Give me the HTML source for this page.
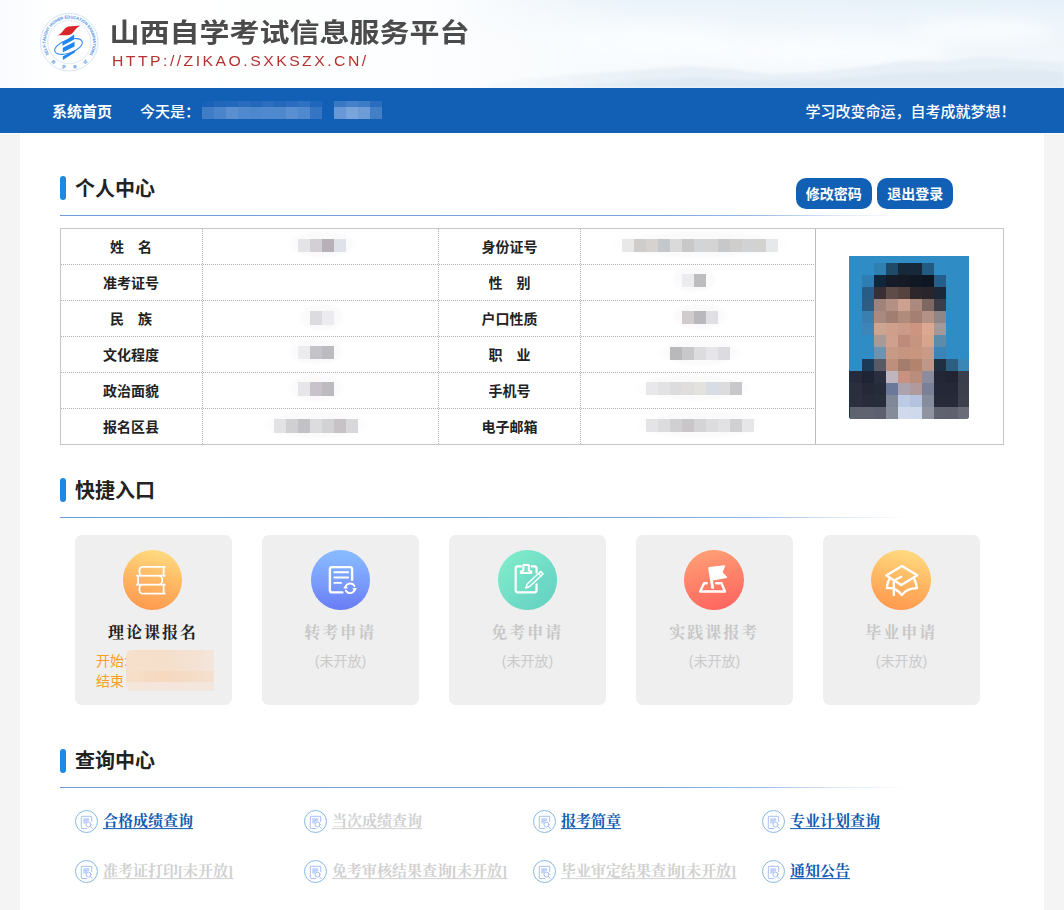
<!DOCTYPE html>
<html lang="zh-CN"><head><meta charset="utf-8"><title>山西自学考试信息服务平台</title>
<style>
html,body{margin:0;padding:0}
body{width:1064px;height:910px;position:relative;overflow:hidden;background:#f4f4f4;font-family:"Liberation Sans","Noto Sans CJK SC",sans-serif}
.p{position:absolute;margin:0;padding:0;display:block;text-decoration:none;font-weight:normal}
.t{position:relative;display:block;overflow:hidden}
.t svg{position:absolute;left:0;top:0;display:block;overflow:visible}
.t .x{position:absolute;left:0;top:0;white-space:nowrap;font-family:"Liberation Sans","Noto Sans CJK SC",sans-serif}
.t .x.b{font-weight:bold}
.t .x.sf{font-family:"Liberation Serif","Noto Serif CJK SC",serif;font-weight:bold}
.hdr{background:#fff;overflow:hidden}
.url{color:#b33330;font-size:14px;letter-spacing:2.19px;line-height:16px;white-space:nowrap;transform:scaleX(1.127);transform-origin:0 0}
.mz i{position:absolute;top:0;height:100%;display:block}
</style></head>
<body>
<div class="p hdr" style="left:0;top:0;width:1064px;height:88px"></div>
<svg class="p" style="left:0;top:0" width="1064" height="88" viewBox="0 0 1064 88" aria-hidden="true"><defs><linearGradient id="sk1" x1="0" x2="1" y1="0" y2="0"><stop offset="0" stop-color="#fbfdff"/><stop offset=".04" stop-color="#ffffff"/><stop offset=".38" stop-color="#fdfeff"/><stop offset=".55" stop-color="#f8fbfd"/><stop offset=".8" stop-color="#f3f8fc"/><stop offset="1" stop-color="#f0f6fb"/></linearGradient><linearGradient id="sk2" x1="0" x2="0" y1="0" y2="1"><stop offset="0" stop-color="#dcebf7" stop-opacity=".5"/><stop offset=".3" stop-color="#e8f2fa" stop-opacity=".25"/><stop offset=".6" stop-color="#fff" stop-opacity="0"/></linearGradient><linearGradient id="sk3" x1="0" x2="1" y1="0" y2="0"><stop offset="0" stop-color="#fff" stop-opacity="0"/><stop offset=".42" stop-color="#fff" stop-opacity="0"/><stop offset=".6" stop-color="#fff" stop-opacity="1"/><stop offset="1" stop-color="#fff" stop-opacity="1"/></linearGradient><linearGradient id="sk4" x1="0" x2="1" y1="0" y2="0"><stop offset="0" stop-color="#f9fbfe"/><stop offset=".55" stop-color="#fbfdff" stop-opacity=".8"/><stop offset="1" stop-color="#fff" stop-opacity="0"/></linearGradient><mask id="skm"><rect width="1064" height="88" fill="url(#sk3)"/></mask><filter id="blr" x="-5%" y="-50%" width="110%" height="200%"><feGaussianBlur stdDeviation="1.6"/></filter><filter id="blr2" x="-10%" y="-80%" width="120%" height="260%"><feGaussianBlur stdDeviation="7"/></filter></defs><rect width="1064" height="88" fill="url(#sk1)"/><g mask="url(#skm)"><rect width="1064" height="88" fill="url(#sk2)"/><g filter="url(#blr2)" fill="#fafdff" opacity=".9"><ellipse cx="640" cy="42" rx="90" ry="16"/><ellipse cx="820" cy="52" rx="130" ry="14"/><ellipse cx="980" cy="30" rx="70" ry="9"/></g><g filter="url(#blr)"><path d="M470 88 L520 80 L580 74 L640 70 L690 66 L730 69 L770 74 L820 72 L870 66 L905 60 L940 62 L985 57 L1020 60 L1064 63 L1064 88Z" fill="#e6eef6" opacity=".85"/><path d="M560 88 L640 80 L700 77 L760 81 L830 79 L900 73 L960 71 L1010 68 L1064 72 L1064 88Z" fill="#dfe9f2" opacity=".8"/></g></g><rect x="0" y="0" width="60" height="88" fill="url(#sk4)"/></svg>
<div class="p" style="left:40.1px;top:12.6px;width:58.6px;height:58.6px"><svg width="58.6" height="58.6" viewBox="0 0 59 59" aria-hidden="true" style="display:block;overflow:visible"><circle cx="29.5" cy="29.4" r="29" fill="#fff" stroke="#cfe2f6" stroke-width="0.9"/><circle cx="29.5" cy="29.4" r="21.7" fill="none" stroke="#d3e5f7" stroke-width="0.8"/><g fill="#4d92e3" font-family="Liberation Sans, sans-serif" font-weight="bold" font-size="4.2" text-anchor="middle"><text transform="translate(8.36 40.55) rotate(242.2)">S</text><text transform="translate(7.25 38.13) rotate(248.6)">E</text><text transform="translate(6.45 35.72) rotate(254.7)">L</text><text transform="translate(5.93 33.34) rotate(260.5)">F</text><text transform="translate(5.69 31.47) rotate(265.0)">-</text><text transform="translate(5.60 29.59) rotate(269.5)">T</text><text transform="translate(5.73 26.93) rotate(275.9)">A</text><text transform="translate(6.20 24.09) rotate(282.8)">U</text><text transform="translate(7.04 21.23) rotate(290.0)">G</text><text transform="translate(8.24 18.49) rotate(297.2)">H</text><text transform="translate(9.58 16.19) rotate(303.5)">T</text><text transform="translate(11.90 13.23) rotate(312.6)">H</text><text transform="translate(13.31 11.82) rotate(317.4)">I</text><text transform="translate(14.92 10.46) rotate(322.4)">G</text><text transform="translate(17.40 8.79) rotate(329.6)">H</text><text transform="translate(19.86 7.53) rotate(336.2)">E</text><text transform="translate(22.46 6.56) rotate(342.9)">R</text><text transform="translate(26.24 5.72) rotate(352.2)">E</text><text transform="translate(29.00 5.51) rotate(358.8)">D</text><text transform="translate(31.88 5.62) rotate(365.7)">U</text><text transform="translate(34.72 6.08) rotate(372.6)">C</text><text transform="translate(37.49 6.87) rotate(379.5)">A</text><text transform="translate(39.94 7.90) rotate(385.9)">T</text><text transform="translate(41.50 8.73) rotate(390.1)">I</text><text transform="translate(43.28 9.87) rotate(395.2)">O</text><text transform="translate(45.61 11.74) rotate(402.4)">N</text><text transform="translate(48.25 14.58) rotate(411.7)">E</text><text transform="translate(49.78 16.75) rotate(418.0)">X</text><text transform="translate(51.11 19.18) rotate(424.7)">A</text><text transform="translate(52.25 22.06) rotate(432.1)">M</text><text transform="translate(52.83 24.20) rotate(437.4)">I</text><text transform="translate(53.18 26.16) rotate(442.2)">N</text><text transform="translate(53.40 29.04) rotate(449.1)">A</text><text transform="translate(53.29 31.69) rotate(455.5)">T</text><text transform="translate(53.05 33.45) rotate(459.7)">I</text><text transform="translate(52.61 35.50) rotate(464.8)">O</text><text transform="translate(51.66 38.34) rotate(472.0)">N</text><text transform="translate(50.48 40.85) rotate(478.6)">S</text></g><g fill="#5e9fe4" font-family="Liberation Sans, Noto Sans CJK SC, sans-serif" font-weight="bold" font-size="4.2" text-anchor="middle"><text transform="translate(13.45 49.22) rotate(39.0)" y="1.6">自</text><text transform="translate(23.76 54.25) rotate(13.0)" y="1.6">学</text><text transform="translate(35.24 54.25) rotate(-13.0)" y="1.6">考</text><text transform="translate(45.55 49.22) rotate(-39.0)" y="1.6">试</text></g><path d="M16.8 22.6C22.2 21.8 23.8 15 28.4 13.6 32.4 12.7 37.2 13.2 40.8 12.5 35.6 14.8 33.8 20.6 30 21.9 26 22.9 21.2 22.2 16.8 22.6Z" fill="#d8262b"/><g fill="#1e86ee"><path d="M22.5 29.8L34.4 21.7V26.8L22.5 32.9Z"/><path d="M23 35.1L34.8 28.9V33.8L23 39.5Z"/><path d="M23 43.5L35.3 37.2V39.6L23 47.4Z"/></g><ellipse cx="28.7" cy="33.7" rx="14.6" ry="6.6" transform="rotate(-20 28.7 33.7)" fill="none" stroke="#2a88ee" stroke-width="1.05"/></svg></div>
<h1 class="p" style="left:109.60px;top:11.40px"><span class="t " style="width:360px;height:42px;"><span class="x b" style="font-size:30px;line-height:42px;color:#4b4b4b;transform:scaleY(.89);transform-origin:0 31px">山西自学考试信息服务平台</span></span></h1>
<span class="p" style="left:112.00px;top:50.85px"><span class="t " style="width:257px;height:20px;"><span class="x url" style="line-height:20px">HTTP://ZIKAO.SXKSZX.CN/</span></span></span>
<div class="p " style="left:0px;top:88px;width:1064px;height:44.7px;background:#1260b5"></div>
<a class="p" style="left:52.00px;top:100.50px"><span class="t " style="width:60px;height:21px;"><span class="x b" style="font-size:15px;line-height:21px;color:#fff">系统首页</span></span></a>
<span class="p" style="left:140.00px;top:100.50px"><span class="t " style="width:60px;height:21px;"><span class="x" style="font-size:15px;line-height:21px;color:#fff;font-weight:500">今天是：</span></span></span>
<div class="p mz" style="left:201.7px;top:100.8px;width:120px;height:6.4px;overflow:hidden;border-radius:6px 0 0 0"><i style="left:0.00px;width:12.30px;background:#1a62b8"></i><i style="left:12.00px;width:12.30px;background:#2066ba"></i><i style="left:24.00px;width:12.30px;background:#2268bc"></i><i style="left:36.00px;width:12.30px;background:#2a6dc0"></i><i style="left:48.00px;width:12.30px;background:#2468bc"></i><i style="left:60.00px;width:12.30px;background:#2b6ec0"></i><i style="left:72.00px;width:12.30px;background:#2468bc"></i><i style="left:84.00px;width:12.30px;background:#2a6dc0"></i><i style="left:96.00px;width:12.30px;background:#2e70c2"></i><i style="left:108.00px;width:12.30px;background:#2066ba"></i></div>
<div class="p mz" style="left:201.7px;top:107px;width:120px;height:11.8px;overflow:hidden;"><i style="left:0.00px;width:12.30px;background:#407dc6"></i><i style="left:12.00px;width:12.30px;background:#4a85cb"></i><i style="left:24.00px;width:12.30px;background:#5a8fd0"></i><i style="left:36.00px;width:12.30px;background:#5089cd"></i><i style="left:48.00px;width:12.30px;background:#4e87cc"></i><i style="left:60.00px;width:12.30px;background:#5089cd"></i><i style="left:72.00px;width:12.30px;background:#4f88cd"></i><i style="left:84.00px;width:12.30px;background:#5a90d2"></i><i style="left:96.00px;width:12.30px;background:#5089cd"></i><i style="left:108.00px;width:12.30px;background:#3675c3"></i></div>
<div class="p mz" style="left:333.7px;top:100.8px;width:48px;height:6.4px;overflow:hidden;"><i style="left:0.00px;width:12.30px;background:#3a78c5"></i><i style="left:12.00px;width:12.30px;background:#4580c9"></i><i style="left:24.00px;width:12.30px;background:#3f7cc7"></i><i style="left:36.00px;width:12.30px;background:#2a6dc0"></i></div>
<div class="p mz" style="left:333.7px;top:107px;width:48px;height:11.8px;overflow:hidden;"><i style="left:0.00px;width:12.30px;background:#6898d5"></i><i style="left:12.00px;width:12.30px;background:#7aa5dc"></i><i style="left:24.00px;width:12.30px;background:#6d9cd7"></i><i style="left:36.00px;width:12.30px;background:#437fc7"></i></div>
<span class="p" style="left:805.50px;top:100.50px"><span class="t " style="width:210px;height:21px;"><span class="x" style="font-size:15px;line-height:21px;color:#fff;font-weight:500">学习改变命运，自考成就梦想！</span></span></span>
<div class="p " style="left:0px;top:132.7px;width:1064px;height:1.3px;background:#fff"></div>
<div class="p " style="left:20px;top:134px;width:1024px;height:776px;background:#fff"></div>
<div class="p " style="left:60px;top:176px;width:6px;height:24px;background:#1e88e5;border-radius:3px"></div>
<h2 class="p" style="left:75.00px;top:175.00px"><span class="t " style="width:80px;height:28px;"><span class="x b" style="font-size:20px;line-height:28px;color:#222222">个人中心</span></span></h2>
<div class="p " style="left:60px;top:215px;width:850px;height:1.2px;background:linear-gradient(90deg,#6e9bdb 0%,#78a5de 70%,rgba(125,170,225,0.8) 82%,rgba(160,195,235,0.35) 92%,rgba(255,255,255,0) 100%)"></div>
<div class="p " style="left:60px;top:478px;width:6px;height:24px;background:#1e88e5;border-radius:3px"></div>
<h2 class="p" style="left:75.00px;top:477.20px"><span class="t " style="width:80px;height:28px;"><span class="x b" style="font-size:20px;line-height:28px;color:#222222">快捷入口</span></span></h2>
<div class="p " style="left:60px;top:517px;width:850px;height:1.2px;background:linear-gradient(90deg,#6e9bdb 0%,#78a5de 70%,rgba(125,170,225,0.8) 82%,rgba(160,195,235,0.35) 92%,rgba(255,255,255,0) 100%)"></div>
<div class="p " style="left:60px;top:748.5px;width:6px;height:24px;background:#1e88e5;border-radius:3px"></div>
<h2 class="p" style="left:75.00px;top:747.30px"><span class="t " style="width:80px;height:28px;"><span class="x b" style="font-size:20px;line-height:28px;color:#222222">查询中心</span></span></h2>
<div class="p " style="left:60px;top:787px;width:850px;height:1.2px;background:linear-gradient(90deg,#6e9bdb 0%,#78a5de 70%,rgba(125,170,225,0.8) 82%,rgba(160,195,235,0.35) 92%,rgba(255,255,255,0) 100%)"></div>
<div class="p " style="left:796px;top:178.4px;width:75.7px;height:30.2px;background:#1260b5;border-radius:10px"></div>
<a class="p" style="left:805.85px;top:183.70px"><span class="t " style="width:56px;height:20px;"><span class="x b" style="font-size:14px;line-height:20px;color:#fff">修改密码</span></span></a>
<div class="p " style="left:877.3px;top:178.4px;width:75.7px;height:30.2px;background:#1260b5;border-radius:10px"></div>
<a class="p" style="left:887.15px;top:183.70px"><span class="t " style="width:56px;height:20px;"><span class="x b" style="font-size:14px;line-height:20px;color:#fff">退出登录</span></span></a>
<div class="p " style="left:60px;top:228px;width:944px;height:217px;border:1px solid #c6c6c6;box-sizing:border-box"></div>
<div class="p " style="left:815px;top:229px;width:1px;height:215px;background:#bcbcbc"></div>
<div class="p " style="left:202px;top:229px;width:1px;height:215px;background:repeating-linear-gradient(180deg,#b2b2b2 0 1px,transparent 1px 2px)"></div>
<div class="p " style="left:438px;top:229px;width:1px;height:215px;background:repeating-linear-gradient(180deg,#b2b2b2 0 1px,transparent 1px 2px)"></div>
<div class="p " style="left:580px;top:229px;width:1px;height:215px;background:repeating-linear-gradient(180deg,#b2b2b2 0 1px,transparent 1px 2px)"></div>
<div class="p " style="left:61px;top:264px;width:754px;height:1px;background:repeating-linear-gradient(90deg,#b2b2b2 0 1px,transparent 1px 2px)"></div>
<div class="p " style="left:61px;top:300px;width:754px;height:1px;background:repeating-linear-gradient(90deg,#b2b2b2 0 1px,transparent 1px 2px)"></div>
<div class="p " style="left:61px;top:336px;width:754px;height:1px;background:repeating-linear-gradient(90deg,#b2b2b2 0 1px,transparent 1px 2px)"></div>
<div class="p " style="left:61px;top:372px;width:754px;height:1px;background:repeating-linear-gradient(90deg,#b2b2b2 0 1px,transparent 1px 2px)"></div>
<div class="p " style="left:61px;top:408px;width:754px;height:1px;background:repeating-linear-gradient(90deg,#b2b2b2 0 1px,transparent 1px 2px)"></div>
<span class="p" style="left:110.00px;top:236.50px"><span class="t " style="width:42px;height:20px;"><span class="x b" style="font-size:14px;line-height:20px;color:#222222">姓　名</span></span></span>
<span class="p" style="left:481.50px;top:236.50px"><span class="t " style="width:56px;height:20px;"><span class="x b" style="font-size:14px;line-height:20px;color:#222222">身份证号</span></span></span>
<span class="p" style="left:103.00px;top:272.50px"><span class="t " style="width:56px;height:20px;"><span class="x b" style="font-size:14px;line-height:20px;color:#222222">准考证号</span></span></span>
<span class="p" style="left:488.50px;top:272.50px"><span class="t " style="width:42px;height:20px;"><span class="x b" style="font-size:14px;line-height:20px;color:#222222">性　别</span></span></span>
<span class="p" style="left:110.00px;top:308.50px"><span class="t " style="width:42px;height:20px;"><span class="x b" style="font-size:14px;line-height:20px;color:#222222">民　族</span></span></span>
<span class="p" style="left:481.50px;top:308.50px"><span class="t " style="width:56px;height:20px;"><span class="x b" style="font-size:14px;line-height:20px;color:#222222">户口性质</span></span></span>
<span class="p" style="left:103.00px;top:344.50px"><span class="t " style="width:56px;height:20px;"><span class="x b" style="font-size:14px;line-height:20px;color:#222222">文化程度</span></span></span>
<span class="p" style="left:488.50px;top:344.50px"><span class="t " style="width:42px;height:20px;"><span class="x b" style="font-size:14px;line-height:20px;color:#222222">职　业</span></span></span>
<span class="p" style="left:103.00px;top:380.50px"><span class="t " style="width:56px;height:20px;"><span class="x b" style="font-size:14px;line-height:20px;color:#222222">政治面貌</span></span></span>
<span class="p" style="left:488.50px;top:380.50px"><span class="t " style="width:42px;height:20px;"><span class="x b" style="font-size:14px;line-height:20px;color:#222222">手机号</span></span></span>
<span class="p" style="left:103.00px;top:416.50px"><span class="t " style="width:56px;height:20px;"><span class="x b" style="font-size:14px;line-height:20px;color:#222222">报名区县</span></span></span>
<span class="p" style="left:481.50px;top:416.50px"><span class="t " style="width:56px;height:20px;"><span class="x b" style="font-size:14px;line-height:20px;color:#222222">电子邮箱</span></span></span>
<div class="p " style="left:286px;top:230px;width:72px;height:29px;border-radius:45%/60%;background:radial-gradient(ellipse closest-side,rgba(249,249,250,.96) 0%,rgba(250,250,251,.92) 78%,rgba(255,255,255,0) 100%)"></div>
<div class="p mz" style="left:298px;top:239px;width:48px;height:13px;overflow:hidden"><i style="left:0.00px;width:12.30px;background:#e4e4e6"></i><i style="left:12.00px;width:12.30px;background:#d2d0d4"></i><i style="left:24.00px;width:12.30px;background:#b8b0b8"></i><i style="left:36.00px;width:12.30px;background:#dfe2e8"></i></div>
<div class="p " style="left:610px;top:230px;width:180px;height:28.5px;border-radius:45%/60%;background:radial-gradient(ellipse closest-side,rgba(249,249,250,.96) 0%,rgba(250,250,251,.92) 78%,rgba(255,255,255,0) 100%)"></div>
<div class="p mz" style="left:622px;top:239px;width:156px;height:12.5px;overflow:hidden"><i style="left:0.00px;width:12.30px;background:#e8e8e8"></i><i style="left:12.00px;width:12.30px;background:#cfcdcc"></i><i style="left:24.00px;width:12.30px;background:#d6d2d0"></i><i style="left:36.00px;width:12.30px;background:#c4c8cc"></i><i style="left:48.00px;width:12.30px;background:#dadada"></i><i style="left:60.00px;width:12.30px;background:#c8c8c8"></i><i style="left:72.00px;width:12.30px;background:#d2d4d6"></i><i style="left:84.00px;width:12.30px;background:#d4d4d4"></i><i style="left:96.00px;width:12.30px;background:#c6c8ca"></i><i style="left:108.00px;width:12.30px;background:#cfcecc"></i><i style="left:120.00px;width:12.30px;background:#d0d2d4"></i><i style="left:132.00px;width:12.30px;background:#d2d2d0"></i><i style="left:144.00px;width:12.30px;background:#e6e8ea"></i></div>
<div class="p " style="left:670px;top:265px;width:48px;height:29px;border-radius:45%/60%;background:radial-gradient(ellipse closest-side,rgba(249,249,250,.96) 0%,rgba(250,250,251,.92) 78%,rgba(255,255,255,0) 100%)"></div>
<div class="p mz" style="left:682px;top:274px;width:24px;height:13px;overflow:hidden"><i style="left:0.00px;width:12.30px;background:#ececee"></i><i style="left:12.00px;width:12.30px;background:#bdbdc0"></i></div>
<div class="p " style="left:298px;top:302px;width:48px;height:30px;border-radius:45%/60%;background:radial-gradient(ellipse closest-side,rgba(249,249,250,.96) 0%,rgba(250,250,251,.92) 78%,rgba(255,255,255,0) 100%)"></div>
<div class="p mz" style="left:310px;top:311px;width:24px;height:14px;overflow:hidden"><i style="left:0.00px;width:12.30px;background:#dcdcde"></i><i style="left:12.00px;width:12.30px;background:#ececf0"></i></div>
<div class="p " style="left:670px;top:302px;width:60px;height:29px;border-radius:45%/60%;background:radial-gradient(ellipse closest-side,rgba(249,249,250,.96) 0%,rgba(250,250,251,.92) 78%,rgba(255,255,255,0) 100%)"></div>
<div class="p mz" style="left:682px;top:311px;width:36px;height:13px;overflow:hidden"><i style="left:0.00px;width:12.30px;background:#d0ccce"></i><i style="left:12.00px;width:12.30px;background:#b9b9bc"></i><i style="left:24.00px;width:12.30px;background:#e0e0e4"></i></div>
<div class="p " style="left:286px;top:337px;width:60px;height:29px;border-radius:45%/60%;background:radial-gradient(ellipse closest-side,rgba(249,249,250,.96) 0%,rgba(250,250,251,.92) 78%,rgba(255,255,255,0) 100%)"></div>
<div class="p mz" style="left:298px;top:346px;width:36px;height:13px;overflow:hidden"><i style="left:0.00px;width:12.30px;background:#ececee"></i><i style="left:12.00px;width:12.30px;background:#c4c4c8"></i><i style="left:24.00px;width:12.30px;background:#bcbcc0"></i></div>
<div class="p " style="left:658px;top:338px;width:84px;height:29px;border-radius:45%/60%;background:radial-gradient(ellipse closest-side,rgba(249,249,250,.96) 0%,rgba(250,250,251,.92) 78%,rgba(255,255,255,0) 100%)"></div>
<div class="p mz" style="left:670px;top:347px;width:60px;height:13px;overflow:hidden"><i style="left:0.00px;width:12.30px;background:#b9b9bc"></i><i style="left:12.00px;width:12.30px;background:#c8c8ca"></i><i style="left:24.00px;width:12.30px;background:#dcdcde"></i><i style="left:36.00px;width:12.30px;background:#e6e6ea"></i><i style="left:48.00px;width:12.30px;background:#dcdce0"></i></div>
<div class="p " style="left:286px;top:373px;width:60px;height:30px;border-radius:45%/60%;background:radial-gradient(ellipse closest-side,rgba(249,249,250,.96) 0%,rgba(250,250,251,.92) 78%,rgba(255,255,255,0) 100%)"></div>
<div class="p mz" style="left:298px;top:382px;width:36px;height:14px;overflow:hidden"><i style="left:0.00px;width:12.30px;background:#e6e6e8"></i><i style="left:12.00px;width:12.30px;background:#c8c2ca"></i><i style="left:24.00px;width:12.30px;background:#bcbcc0"></i></div>
<div class="p " style="left:634px;top:373px;width:120px;height:29px;border-radius:45%/60%;background:radial-gradient(ellipse closest-side,rgba(249,249,250,.96) 0%,rgba(250,250,251,.92) 78%,rgba(255,255,255,0) 100%)"></div>
<div class="p mz" style="left:646px;top:382px;width:96px;height:13px;overflow:hidden"><i style="left:0.00px;width:12.30px;background:#e8e8ea"></i><i style="left:12.00px;width:12.30px;background:#e2e2e4"></i><i style="left:24.00px;width:12.30px;background:#dcdcde"></i><i style="left:36.00px;width:12.30px;background:#e0dedc"></i><i style="left:48.00px;width:12.30px;background:#e4e2de"></i><i style="left:60.00px;width:12.30px;background:#d8dce4"></i><i style="left:72.00px;width:12.30px;background:#dcdcde"></i><i style="left:84.00px;width:12.30px;background:#c8c8ca"></i></div>
<div class="p " style="left:262px;top:410px;width:108px;height:30px;border-radius:45%/60%;background:radial-gradient(ellipse closest-side,rgba(249,249,250,.96) 0%,rgba(250,250,251,.92) 78%,rgba(255,255,255,0) 100%)"></div>
<div class="p mz" style="left:274px;top:419px;width:84px;height:14px;overflow:hidden"><i style="left:0.00px;width:12.30px;background:#e2e2e4"></i><i style="left:12.00px;width:12.30px;background:#d0d0d2"></i><i style="left:24.00px;width:12.30px;background:#c2c2c6"></i><i style="left:36.00px;width:12.30px;background:#dcdcde"></i><i style="left:48.00px;width:12.30px;background:#d2d2d4"></i><i style="left:60.00px;width:12.30px;background:#c6c2c6"></i><i style="left:72.00px;width:12.30px;background:#d8d8da"></i></div>
<div class="p " style="left:634px;top:410px;width:132px;height:29px;border-radius:45%/60%;background:radial-gradient(ellipse closest-side,rgba(249,249,250,.96) 0%,rgba(250,250,251,.92) 78%,rgba(255,255,255,0) 100%)"></div>
<div class="p mz" style="left:646px;top:419px;width:108px;height:13px;overflow:hidden"><i style="left:0.00px;width:12.30px;background:#e4e4e6"></i><i style="left:12.00px;width:12.30px;background:#dcdcde"></i><i style="left:24.00px;width:12.30px;background:#d0d0d2"></i><i style="left:36.00px;width:12.30px;background:#c8c6c8"></i><i style="left:48.00px;width:12.30px;background:#d4d4d6"></i><i style="left:60.00px;width:12.30px;background:#dcdcde"></i><i style="left:72.00px;width:12.30px;background:#e2e2e4"></i><i style="left:84.00px;width:12.30px;background:#d0d0d2"></i><i style="left:96.00px;width:12.30px;background:#e6e6e8"></i></div>
<div class="p " style="left:849px;top:256px;width:120px;height:163px;overflow:hidden;border-radius:0 0 3px 3px"><svg width="120" height="163" viewBox="0 0 120 163" aria-hidden="true"><rect width="120" height="163" fill="#308cc4"/><path d="M0 115 L26 103 L26 163 L0 163Z" fill="#1d3048"/><rect x="1" y="-5" width="12.4" height="12.4" fill="#308cc4"/><rect x="13" y="-5" width="12.4" height="12.4" fill="#308cc4"/><rect x="25" y="-5" width="12.4" height="12.4" fill="#308cc4"/><rect x="37" y="-5" width="12.4" height="12.4" fill="#308cc4"/><rect x="49" y="-5" width="12.4" height="12.4" fill="#308cc4"/><rect x="61" y="-5" width="12.4" height="12.4" fill="#308cc4"/><rect x="73" y="-5" width="12.4" height="12.4" fill="#308cc4"/><rect x="85" y="-5" width="12.4" height="12.4" fill="#308cc4"/><rect x="97" y="-5" width="12.4" height="12.4" fill="#308cc4"/><rect x="109" y="-5" width="12.4" height="12.4" fill="#308cc4"/><rect x="1" y="7" width="12.4" height="12.4" fill="#308cc4"/><rect x="13" y="7" width="12.4" height="12.4" fill="#308cc4"/><rect x="25" y="7" width="12.4" height="12.4" fill="#2f7fb2"/><rect x="37" y="7" width="12.4" height="12.4" fill="#1f4a68"/><rect x="49" y="7" width="12.4" height="12.4" fill="#16283a"/><rect x="61" y="7" width="12.4" height="12.4" fill="#16283a"/><rect x="73" y="7" width="12.4" height="12.4" fill="#235a82"/><rect x="85" y="7" width="12.4" height="12.4" fill="#308cc4"/><rect x="97" y="7" width="12.4" height="12.4" fill="#308cc4"/><rect x="109" y="7" width="12.4" height="12.4" fill="#308cc4"/><rect x="1" y="19" width="12.4" height="12.4" fill="#308cc4"/><rect x="13" y="19" width="12.4" height="12.4" fill="#2d7fb3"/><rect x="25" y="19" width="12.4" height="12.4" fill="#11263a"/><rect x="37" y="19" width="12.4" height="12.4" fill="#151c28"/><rect x="49" y="19" width="12.4" height="12.4" fill="#151a25"/><rect x="61" y="19" width="12.4" height="12.4" fill="#101824"/><rect x="73" y="19" width="12.4" height="12.4" fill="#0d1622"/><rect x="85" y="19" width="12.4" height="12.4" fill="#235f8a"/><rect x="97" y="19" width="12.4" height="12.4" fill="#308cc4"/><rect x="109" y="19" width="12.4" height="12.4" fill="#308cc4"/><rect x="1" y="31" width="12.4" height="12.4" fill="#308cc4"/><rect x="13" y="31" width="12.4" height="12.4" fill="#275c86"/><rect x="25" y="31" width="12.4" height="12.4" fill="#3a2d33"/><rect x="37" y="31" width="12.4" height="12.4" fill="#5e4c48"/><rect x="49" y="31" width="12.4" height="12.4" fill="#56433f"/><rect x="61" y="31" width="12.4" height="12.4" fill="#2d262b"/><rect x="73" y="31" width="12.4" height="12.4" fill="#2a252a"/><rect x="85" y="31" width="12.4" height="12.4" fill="#1c2838"/><rect x="97" y="31" width="12.4" height="12.4" fill="#308cc4"/><rect x="109" y="31" width="12.4" height="12.4" fill="#308cc4"/><rect x="1" y="43" width="12.4" height="12.4" fill="#308cc4"/><rect x="13" y="43" width="12.4" height="12.4" fill="#2f5c83"/><rect x="25" y="43" width="12.4" height="12.4" fill="#a08278"/><rect x="37" y="43" width="12.4" height="12.4" fill="#b39083"/><rect x="49" y="43" width="12.4" height="12.4" fill="#cea08f"/><rect x="61" y="43" width="12.4" height="12.4" fill="#ab897d"/><rect x="73" y="43" width="12.4" height="12.4" fill="#7e6861"/><rect x="85" y="43" width="12.4" height="12.4" fill="#3c3f4a"/><rect x="97" y="43" width="12.4" height="12.4" fill="#308cc4"/><rect x="109" y="43" width="12.4" height="12.4" fill="#308cc4"/><rect x="1" y="55" width="12.4" height="12.4" fill="#308cc4"/><rect x="13" y="55" width="12.4" height="12.4" fill="#3b7fae"/><rect x="25" y="55" width="12.4" height="12.4" fill="#a88a80"/><rect x="37" y="55" width="12.4" height="12.4" fill="#a07f72"/><rect x="49" y="55" width="12.4" height="12.4" fill="#af8c7c"/><rect x="61" y="55" width="12.4" height="12.4" fill="#a47f72"/><rect x="73" y="55" width="12.4" height="12.4" fill="#b39184"/><rect x="85" y="55" width="12.4" height="12.4" fill="#8f8685"/><rect x="97" y="55" width="12.4" height="12.4" fill="#308cc4"/><rect x="109" y="55" width="12.4" height="12.4" fill="#308cc4"/><rect x="1" y="67" width="12.4" height="12.4" fill="#308cc4"/><rect x="13" y="67" width="12.4" height="12.4" fill="#3d85b8"/><rect x="25" y="67" width="12.4" height="12.4" fill="#cba594"/><rect x="37" y="67" width="12.4" height="12.4" fill="#cf9f8c"/><rect x="49" y="67" width="12.4" height="12.4" fill="#cb9b87"/><rect x="61" y="67" width="12.4" height="12.4" fill="#cc9580"/><rect x="73" y="67" width="12.4" height="12.4" fill="#dba892"/><rect x="85" y="67" width="12.4" height="12.4" fill="#a3989a"/><rect x="97" y="67" width="12.4" height="12.4" fill="#308cc4"/><rect x="109" y="67" width="12.4" height="12.4" fill="#308cc4"/><rect x="1" y="79" width="12.4" height="12.4" fill="#308cc4"/><rect x="13" y="79" width="12.4" height="12.4" fill="#308cc4"/><rect x="25" y="79" width="12.4" height="12.4" fill="#a79a98"/><rect x="37" y="79" width="12.4" height="12.4" fill="#cfa08d"/><rect x="49" y="79" width="12.4" height="12.4" fill="#bd8a7c"/><rect x="61" y="79" width="12.4" height="12.4" fill="#c7947f"/><rect x="73" y="79" width="12.4" height="12.4" fill="#d8a48d"/><rect x="85" y="79" width="12.4" height="12.4" fill="#5d8cab"/><rect x="97" y="79" width="12.4" height="12.4" fill="#308cc4"/><rect x="109" y="79" width="12.4" height="12.4" fill="#308cc4"/><rect x="1" y="91" width="12.4" height="12.4" fill="#308cc4"/><rect x="13" y="91" width="12.4" height="12.4" fill="#308cc4"/><rect x="25" y="91" width="12.4" height="12.4" fill="#6f92ad"/><rect x="37" y="91" width="12.4" height="12.4" fill="#c79a86"/><rect x="49" y="91" width="12.4" height="12.4" fill="#c5957f"/><rect x="61" y="91" width="12.4" height="12.4" fill="#c8967f"/><rect x="73" y="91" width="12.4" height="12.4" fill="#c99b86"/><rect x="85" y="91" width="12.4" height="12.4" fill="#3a85b5"/><rect x="97" y="91" width="12.4" height="12.4" fill="#308cc4"/><rect x="109" y="91" width="12.4" height="12.4" fill="#308cc4"/><rect x="1" y="103" width="12.4" height="12.4" fill="#308cc4"/><rect x="13" y="103" width="12.4" height="12.4" fill="#1c3a55"/><rect x="25" y="103" width="12.4" height="12.4" fill="#585a66"/><rect x="37" y="103" width="12.4" height="12.4" fill="#bd8f7c"/><rect x="49" y="103" width="12.4" height="12.4" fill="#a57d6c"/><rect x="61" y="103" width="12.4" height="12.4" fill="#b3846d"/><rect x="73" y="103" width="12.4" height="12.4" fill="#bd9888"/><rect x="85" y="103" width="12.4" height="12.4" fill="#1f3042"/><rect x="97" y="103" width="12.4" height="12.4" fill="#2b5f82"/><rect x="109" y="103" width="12.4" height="12.4" fill="#3a86b6"/><rect x="1" y="115" width="12.4" height="12.4" fill="#262a3a"/><rect x="13" y="115" width="12.4" height="12.4" fill="#1f2434"/><rect x="25" y="115" width="12.4" height="12.4" fill="#2a2f3f"/><rect x="37" y="115" width="12.4" height="12.4" fill="#bfb5bf"/><rect x="49" y="115" width="12.4" height="12.4" fill="#c9917f"/><rect x="61" y="115" width="12.4" height="12.4" fill="#b98d7c"/><rect x="73" y="115" width="12.4" height="12.4" fill="#8b8c9f"/><rect x="85" y="115" width="12.4" height="12.4" fill="#232635"/><rect x="97" y="115" width="12.4" height="12.4" fill="#212433"/><rect x="109" y="115" width="12.4" height="12.4" fill="#3b3f4d"/><rect x="1" y="127" width="12.4" height="12.4" fill="#2a2e3d"/><rect x="13" y="127" width="12.4" height="12.4" fill="#242837"/><rect x="25" y="127" width="12.4" height="12.4" fill="#262b3a"/><rect x="37" y="127" width="12.4" height="12.4" fill="#6b789a"/><rect x="49" y="127" width="12.4" height="12.4" fill="#aba3ae"/><rect x="61" y="127" width="12.4" height="12.4" fill="#b09a9e"/><rect x="73" y="127" width="12.4" height="12.4" fill="#7a8098"/><rect x="85" y="127" width="12.4" height="12.4" fill="#252838"/><rect x="97" y="127" width="12.4" height="12.4" fill="#252837"/><rect x="109" y="127" width="12.4" height="12.4" fill="#3c404d"/><rect x="1" y="139" width="12.4" height="12.4" fill="#2c303e"/><rect x="13" y="139" width="12.4" height="12.4" fill="#272b3a"/><rect x="25" y="139" width="12.4" height="12.4" fill="#282d3b"/><rect x="37" y="139" width="12.4" height="12.4" fill="#7f8799"/><rect x="49" y="139" width="12.4" height="12.4" fill="#bccbe3"/><rect x="61" y="139" width="12.4" height="12.4" fill="#b5c2dd"/><rect x="73" y="139" width="12.4" height="12.4" fill="#858c9c"/><rect x="85" y="139" width="12.4" height="12.4" fill="#272a39"/><rect x="97" y="139" width="12.4" height="12.4" fill="#272a38"/><rect x="109" y="139" width="12.4" height="12.4" fill="#3d414e"/><rect x="1" y="151" width="12.4" height="12.4" fill="#5f6370"/><rect x="13" y="151" width="12.4" height="12.4" fill="#5f6370"/><rect x="25" y="151" width="12.4" height="12.4" fill="#5c606e"/><rect x="37" y="151" width="12.4" height="12.4" fill="#858b99"/><rect x="49" y="151" width="12.4" height="12.4" fill="#d0daec"/><rect x="61" y="151" width="12.4" height="12.4" fill="#cfd9ec"/><rect x="73" y="151" width="12.4" height="12.4" fill="#8f94a0"/><rect x="85" y="151" width="12.4" height="12.4" fill="#5f626f"/><rect x="97" y="151" width="12.4" height="12.4" fill="#5f626e"/><rect x="109" y="151" width="12.4" height="12.4" fill="#6a6d78"/></svg></div>
<div class="p " style="left:75px;top:535.1px;width:156.8px;height:169.8px;background:#efefef;border-radius:7px"></div>
<div class="p" style="left:122.90px;top:550.2px;width:59.6px;height:59.6px;border-radius:50%;background:linear-gradient(192deg,#ffd77c 12%,#ffb763 50%,#ff9a4f 92%)"><svg width="59.6" height="59.6" viewBox="0 0 60 60" aria-hidden="true" style="display:block"><g fill="none" stroke="#fff" stroke-width="1.8" stroke-linejoin="round"><path d="M42.8 16.9H19.4a2.9 4.5 0 0 0 0 9"/><path d="M40.9 16.9v9"/><path d="M13.2 25.9h29.6"/><path d="M15.2 25.9v9"/><path d="M36.5 25.9a3 4.5 0 0 1 0 9"/><path d="M13.2 34.9h29.6"/><path d="M19.4 34.9a2.9 4.5 0 0 0 0 9H42.8"/><path d="M40.9 34.9v9"/></g></svg></div>
<h3 class="p" style="left:108.10px;top:622.00px"><span class="t " style="width:90px;height:22px;"><span class="x sf" style="font-size:16px;line-height:22px;letter-spacing:2px;color:#222222">理论课报名</span></span></h3>
<div class="p " style="left:262.2px;top:535.1px;width:156.8px;height:169.8px;background:#efefef;border-radius:7px"></div>
<div class="p" style="left:310.80px;top:550.2px;width:59.6px;height:59.6px;border-radius:50%;background:linear-gradient(180deg,#86b9ff 8%,#7a9cfb 55%,#6a7ef5 96%)"><svg width="59.6" height="59.6" viewBox="0 0 60 60" aria-hidden="true" style="display:block"><g fill="none" stroke="#fff" stroke-linecap="round" stroke-linejoin="round"><path stroke-width="2.4" d="M31.6 42.7H21.2a2.2 2.2 0 0 1-2.2-2.2V19.5a2.2 2.2 0 0 1 2.2-2.2h18a2.2 2.2 0 0 1 2.2 2.2V30"/><path stroke-width="2" d="M23.6 22.5h13.8M23.6 27.8h13.8M23.6 33.1h6.6"/><path stroke-width="1.8" d="M34.6 38a4.9 4.9 0 0 1 9.2-1.6M44.2 39.2a4.9 4.9 0 0 1-9.2 1.6"/></g><path fill="#fff" d="M32.4 38.6l2.6-3.4 2.2 3.6zM46.4 38.6l-2.6 3.4-2.2-3.6z"/></svg></div>
<h3 class="p" style="left:304.30px;top:622.00px"><span class="t " style="width:72px;height:22px;"><span class="x sf" style="font-size:16px;line-height:22px;letter-spacing:2px;color:#c7c7c7">转考申请</span></span></h3>
<span class="p" style="left:314.87px;top:650.80px"><span class="t " style="width:52px;height:20px;"><span class="x" style="font-size:14px;line-height:20px;color:#cacaca">(未开放)</span></span></span>
<div class="p " style="left:449.2px;top:535.1px;width:156.8px;height:169.8px;background:#efefef;border-radius:7px"></div>
<div class="p" style="left:497.50px;top:550.2px;width:59.6px;height:59.6px;border-radius:50%;background:linear-gradient(135deg,#80ecca 10%,#70dcc6 55%,#64d0c2 95%)"><svg width="59.6" height="59.6" viewBox="0 0 60 60" aria-hidden="true" style="display:block"><g fill="none" stroke="#fff" stroke-linecap="round" stroke-linejoin="round"><path stroke-width="2.2" d="M23.2 16.5H19.8a2 2 0 0 0-2 2V40.6a2 2 0 0 0 2 2H36.8a2 2 0 0 0 2-2V34.6M33.8 16.5h3a2 2 0 0 1 2 2V22.6"/><path stroke-width="2" d="M25.6 20.6V15h5.4v5.6l2.6 1.2v1.4H23v-1.4z"/><path stroke-width="1.5" d="M28 38.2l1.4-4L43 21.6l2.4 2.6L31.8 36.8z"/><path stroke-width="1.3" d="M41 23.6l2.4 2.6"/></g></svg></div>
<h3 class="p" style="left:491.30px;top:622.00px"><span class="t " style="width:72px;height:22px;"><span class="x sf" style="font-size:16px;line-height:22px;letter-spacing:2px;color:#c7c7c7">免考申请</span></span></h3>
<span class="p" style="left:501.87px;top:650.80px"><span class="t " style="width:52px;height:20px;"><span class="x" style="font-size:14px;line-height:20px;color:#cacaca">(未开放)</span></span></span>
<div class="p " style="left:636.1px;top:535.1px;width:156.8px;height:169.8px;background:#efefef;border-radius:7px"></div>
<div class="p" style="left:684.10px;top:550.2px;width:59.6px;height:59.6px;border-radius:50%;background:linear-gradient(165deg,#ff9e76 8%,#ff8068 52%,#ff625f 96%)"><svg width="59.6" height="59.6" viewBox="0 0 60 60" aria-hidden="true" style="display:block"><path fill="#fff" d="M24.4 18.6q0-1.2 1.2-1.4L40.6 15.3q1.3-.1.8 1.1L38.9 22.4l4.4 4.6q.8 1-.5 1.3L29.2 30.6l1.1 7.6q.1.9-.8.9h-1.2q-.8 0-.9-.8z"/><path fill="none" stroke="#fff" stroke-width="2.4" stroke-linecap="round" stroke-linejoin="round" d="M22.8 33.5H20.2L16.2 41.8H41.2L37.8 33.5H32.4"/></svg></div>
<h3 class="p" style="left:669.20px;top:622.00px"><span class="t " style="width:90px;height:22px;"><span class="x sf" style="font-size:16px;line-height:22px;letter-spacing:2px;color:#c7c7c7">实践课报考</span></span></h3>
<span class="p" style="left:688.77px;top:650.80px"><span class="t " style="width:52px;height:20px;"><span class="x" style="font-size:14px;line-height:20px;color:#cacaca">(未开放)</span></span></span>
<div class="p " style="left:823.2px;top:535.1px;width:156.8px;height:169.8px;background:#efefef;border-radius:7px"></div>
<div class="p" style="left:871.10px;top:550.2px;width:59.6px;height:59.6px;border-radius:50%;background:linear-gradient(192deg,#ffd77c 12%,#ffb763 50%,#ff9a4f 92%)"><svg width="59.6" height="59.6" viewBox="0 0 60 60" aria-hidden="true" style="display:block"><g fill="none" stroke="#fff" stroke-width="2.4" stroke-linecap="round" stroke-linejoin="round"><path d="M31.2 16.1L46.6 25.4 30.5 35.2 15.4 25.6z"/><path d="M30.4 27L23 31V45.2"/><path d="M18.2 30q-2.2 4.2-2.2 8.4H22"/><path d="M24 39.4q4 2 7 6 4.6-6.6 15.2-7-.2-4.4-2.4-8.6"/></g></svg></div>
<h3 class="p" style="left:865.30px;top:622.00px"><span class="t " style="width:72px;height:22px;"><span class="x sf" style="font-size:16px;line-height:22px;letter-spacing:2px;color:#c7c7c7">毕业申请</span></span></h3>
<span class="p" style="left:875.87px;top:650.80px"><span class="t " style="width:52px;height:20px;"><span class="x" style="font-size:14px;line-height:20px;color:#cacaca">(未开放)</span></span></span>
<span class="p" style="left:96.00px;top:651.00px"><span class="t " style="width:32px;height:20px;"><span class="x" style="font-size:14px;line-height:20px;color:#f99f1e">开始:</span></span></span>
<span class="p" style="left:96.00px;top:671.00px"><span class="t " style="width:28px;height:20px;"><span class="x" style="font-size:14px;line-height:20px;color:#f99f1e">结束</span></span></span>
<div class="p " style="left:126px;top:650px;width:88px;height:41px;overflow:hidden;border-radius:6px 0 0 6px"><i style="position:absolute;left:0;top:0;width:100%;height:50%;background:linear-gradient(90deg,#f6e0cc,#f5dfca 45%,#f4e2d3 80%,#f3e6dd)"></i><i style="position:absolute;left:0;top:50%;width:100%;height:50%;background:linear-gradient(90deg,#f6dfca,#f6d9bf 40%,#f5dcc6 75%,#f5e0d0)"></i><i style="position:absolute;left:0;top:78%;width:100%;height:22%;background:linear-gradient(90deg,#f5e6da,#f3e6dc)"></i></div>
<div class="p" style="left:74.9px;top:809.9px;width:23px;height:23px"><svg width="23" height="23" viewBox="0 0 23 23" aria-hidden="true" style="display:block"><circle cx="11.5" cy="11.5" r="11" fill="#fff" stroke="#86b8e4" stroke-width="1"/><path d="M8.3 8.3h5.9v3.1a3.2 3.2 0 0 0-3.6 2H8.3z" fill="#bfd2fb"/><g fill="none" stroke="#a6c0f8" stroke-width="1" stroke-linejoin="round" stroke-linecap="round"><path d="M11.8 18.5H7a.7.7 0 0 1-.7-.7V7a.7.7 0 0 1 .7-.7h9a.7.7 0 0 1 .7.7V11.6"/><circle cx="13.5" cy="14.6" r="2.5"/><path d="M15.4 16.5l1.9 2"/></g></svg></div>
<a class="p" style="left:103.00px;top:810.80px"><span class="t " style="width:90px;height:21px;"><svg width="90" height="21" viewBox="0 0 90 21" fill="#0f5ab2" aria-hidden="true"><rect x="0" y="17.10" width="90.00" height="1.00"/></svg><span class="x sf" style="font-size:15px;line-height:21px;color:#0f5ab2">合格成绩查询</span></span></a>
<div class="p" style="left:303.9px;top:809.9px;width:23px;height:23px"><svg width="23" height="23" viewBox="0 0 23 23" aria-hidden="true" style="display:block"><circle cx="11.5" cy="11.5" r="11" fill="#fff" stroke="#86b8e4" stroke-width="1"/><path d="M8.3 8.3h5.9v3.1a3.2 3.2 0 0 0-3.6 2H8.3z" fill="#bfd2fb"/><g fill="none" stroke="#a6c0f8" stroke-width="1" stroke-linejoin="round" stroke-linecap="round"><path d="M11.8 18.5H7a.7.7 0 0 1-.7-.7V7a.7.7 0 0 1 .7-.7h9a.7.7 0 0 1 .7.7V11.6"/><circle cx="13.5" cy="14.6" r="2.5"/><path d="M15.4 16.5l1.9 2"/></g></svg></div>
<a class="p" style="left:332.00px;top:810.80px"><span class="t " style="width:90px;height:21px;"><svg width="90" height="21" viewBox="0 0 90 21" fill="#d0d0d0" aria-hidden="true"><rect x="0" y="17.10" width="90.00" height="1.00"/></svg><span class="x sf" style="font-size:15px;line-height:21px;color:#d0d0d0">当次成绩查询</span></span></a>
<div class="p" style="left:532.9px;top:809.9px;width:23px;height:23px"><svg width="23" height="23" viewBox="0 0 23 23" aria-hidden="true" style="display:block"><circle cx="11.5" cy="11.5" r="11" fill="#fff" stroke="#86b8e4" stroke-width="1"/><path d="M8.3 8.3h5.9v3.1a3.2 3.2 0 0 0-3.6 2H8.3z" fill="#bfd2fb"/><g fill="none" stroke="#a6c0f8" stroke-width="1" stroke-linejoin="round" stroke-linecap="round"><path d="M11.8 18.5H7a.7.7 0 0 1-.7-.7V7a.7.7 0 0 1 .7-.7h9a.7.7 0 0 1 .7.7V11.6"/><circle cx="13.5" cy="14.6" r="2.5"/><path d="M15.4 16.5l1.9 2"/></g></svg></div>
<a class="p" style="left:561.00px;top:810.80px"><span class="t " style="width:60px;height:21px;"><svg width="60" height="21" viewBox="0 0 60 21" fill="#0f5ab2" aria-hidden="true"><rect x="0" y="17.10" width="60.00" height="1.00"/></svg><span class="x sf" style="font-size:15px;line-height:21px;color:#0f5ab2">报考简章</span></span></a>
<div class="p" style="left:761.9px;top:809.9px;width:23px;height:23px"><svg width="23" height="23" viewBox="0 0 23 23" aria-hidden="true" style="display:block"><circle cx="11.5" cy="11.5" r="11" fill="#fff" stroke="#86b8e4" stroke-width="1"/><path d="M8.3 8.3h5.9v3.1a3.2 3.2 0 0 0-3.6 2H8.3z" fill="#bfd2fb"/><g fill="none" stroke="#a6c0f8" stroke-width="1" stroke-linejoin="round" stroke-linecap="round"><path d="M11.8 18.5H7a.7.7 0 0 1-.7-.7V7a.7.7 0 0 1 .7-.7h9a.7.7 0 0 1 .7.7V11.6"/><circle cx="13.5" cy="14.6" r="2.5"/><path d="M15.4 16.5l1.9 2"/></g></svg></div>
<a class="p" style="left:790.00px;top:810.80px"><span class="t " style="width:90px;height:21px;"><svg width="90" height="21" viewBox="0 0 90 21" fill="#0f5ab2" aria-hidden="true"><rect x="0" y="17.10" width="90.00" height="1.00"/></svg><span class="x sf" style="font-size:15px;line-height:21px;color:#0f5ab2">专业计划查询</span></span></a>
<div class="p" style="left:74.9px;top:859.9px;width:23px;height:23px"><svg width="23" height="23" viewBox="0 0 23 23" aria-hidden="true" style="display:block"><circle cx="11.5" cy="11.5" r="11" fill="#fff" stroke="#86b8e4" stroke-width="1"/><path d="M8.3 8.3h5.9v3.1a3.2 3.2 0 0 0-3.6 2H8.3z" fill="#bfd2fb"/><g fill="none" stroke="#a6c0f8" stroke-width="1" stroke-linejoin="round" stroke-linecap="round"><path d="M11.8 18.5H7a.7.7 0 0 1-.7-.7V7a.7.7 0 0 1 .7-.7h9a.7.7 0 0 1 .7.7V11.6"/><circle cx="13.5" cy="14.6" r="2.5"/><path d="M15.4 16.5l1.9 2"/></g></svg></div>
<a class="p" style="left:103.00px;top:860.80px"><span class="t " style="width:131px;height:21px;"><svg width="131" height="21" viewBox="0 0 131 21" fill="#d0d0d0" aria-hidden="true"><rect x="0" y="17.10" width="130.56" height="1.00"/></svg><span class="x sf" style="font-size:15px;line-height:21px;color:#d0d0d0">准考证打印[未开放]</span></span></a>
<div class="p" style="left:303.9px;top:859.9px;width:23px;height:23px"><svg width="23" height="23" viewBox="0 0 23 23" aria-hidden="true" style="display:block"><circle cx="11.5" cy="11.5" r="11" fill="#fff" stroke="#86b8e4" stroke-width="1"/><path d="M8.3 8.3h5.9v3.1a3.2 3.2 0 0 0-3.6 2H8.3z" fill="#bfd2fb"/><g fill="none" stroke="#a6c0f8" stroke-width="1" stroke-linejoin="round" stroke-linecap="round"><path d="M11.8 18.5H7a.7.7 0 0 1-.7-.7V7a.7.7 0 0 1 .7-.7h9a.7.7 0 0 1 .7.7V11.6"/><circle cx="13.5" cy="14.6" r="2.5"/><path d="M15.4 16.5l1.9 2"/></g></svg></div>
<a class="p" style="left:332.00px;top:860.80px"><span class="t " style="width:176px;height:21px;"><svg width="176" height="21" viewBox="0 0 176 21" fill="#d0d0d0" aria-hidden="true"><rect x="0" y="17.10" width="175.56" height="1.00"/></svg><span class="x sf" style="font-size:15px;line-height:21px;color:#d0d0d0">免考审核结果查询[未开放]</span></span></a>
<div class="p" style="left:532.9px;top:859.9px;width:23px;height:23px"><svg width="23" height="23" viewBox="0 0 23 23" aria-hidden="true" style="display:block"><circle cx="11.5" cy="11.5" r="11" fill="#fff" stroke="#86b8e4" stroke-width="1"/><path d="M8.3 8.3h5.9v3.1a3.2 3.2 0 0 0-3.6 2H8.3z" fill="#bfd2fb"/><g fill="none" stroke="#a6c0f8" stroke-width="1" stroke-linejoin="round" stroke-linecap="round"><path d="M11.8 18.5H7a.7.7 0 0 1-.7-.7V7a.7.7 0 0 1 .7-.7h9a.7.7 0 0 1 .7.7V11.6"/><circle cx="13.5" cy="14.6" r="2.5"/><path d="M15.4 16.5l1.9 2"/></g></svg></div>
<a class="p" style="left:561.00px;top:860.80px"><span class="t " style="width:176px;height:21px;"><svg width="176" height="21" viewBox="0 0 176 21" fill="#d0d0d0" aria-hidden="true"><rect x="0" y="17.10" width="175.56" height="1.00"/></svg><span class="x sf" style="font-size:15px;line-height:21px;color:#d0d0d0">毕业审定结果查询[未开放]</span></span></a>
<div class="p" style="left:761.9px;top:859.9px;width:23px;height:23px"><svg width="23" height="23" viewBox="0 0 23 23" aria-hidden="true" style="display:block"><circle cx="11.5" cy="11.5" r="11" fill="#fff" stroke="#86b8e4" stroke-width="1"/><path d="M8.3 8.3h5.9v3.1a3.2 3.2 0 0 0-3.6 2H8.3z" fill="#bfd2fb"/><g fill="none" stroke="#a6c0f8" stroke-width="1" stroke-linejoin="round" stroke-linecap="round"><path d="M11.8 18.5H7a.7.7 0 0 1-.7-.7V7a.7.7 0 0 1 .7-.7h9a.7.7 0 0 1 .7.7V11.6"/><circle cx="13.5" cy="14.6" r="2.5"/><path d="M15.4 16.5l1.9 2"/></g></svg></div>
<a class="p" style="left:790.00px;top:860.80px"><span class="t " style="width:60px;height:21px;"><svg width="60" height="21" viewBox="0 0 60 21" fill="#0f5ab2" aria-hidden="true"><rect x="0" y="17.10" width="60.00" height="1.00"/></svg><span class="x sf" style="font-size:15px;line-height:21px;color:#0f5ab2">通知公告</span></span></a>
</body></html>
